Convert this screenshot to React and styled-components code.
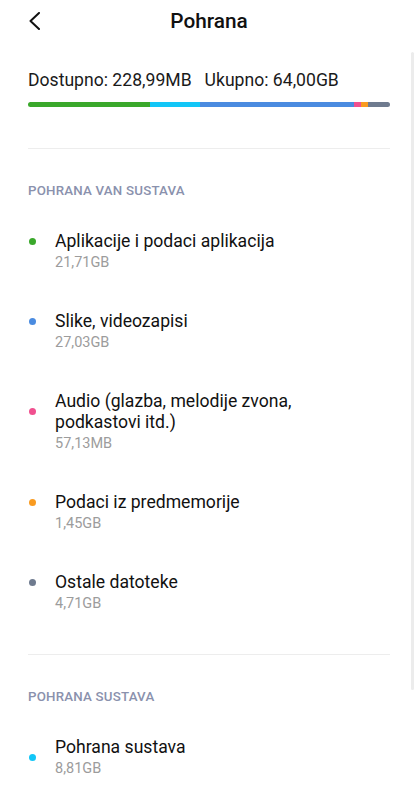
import React from 'react'
import styled, { createGlobalStyle } from 'styled-components';

const GlobalStyle = createGlobalStyle`
    html, body {
        margin: 0;
        padding: 0;
        background: #fff;
    }
    body {
        font-family: Roboto, "Noto Sans", sans-serif;
        color: #111;
    }
`;

const Screen = styled.div`
    position: relative;
    width: 418px;
    height: 800px;
    overflow: hidden;
    background: #fff;
`;

const Content = styled.div`
    padding: 0 28px;
`;

const Header = styled.div`
    position: relative;
    display: flex;
    align-items: center;
    justify-content: center;
    height: 42px;
`;

const BackButton = styled.div`
    position: absolute;
    left: 28px;
    top: 12px;
    width: 14px;
    height: 18px;
`;

const Title = styled.div`
    font-size: 20.8px;
    font-weight: 500;
    color: #111;
`;

const Summary = styled.div`
    display: flex;
    gap: 13px;
    margin-top: 27px;
    font-size: 17.6px;
    line-height: 22px;
    color: #1a1a1a;
`;

const Bar = styled.div`
    display: flex;
    height: 5px;
    margin-top: 11px;
    border-radius: 3px;
    overflow: hidden;
`;

const Segment = styled.div`
    background: ${ p => p.color };
`;

const Divider = styled.div`
    height: 1px;
    background: #ededed;
    margin-top: ${ p => p.top }px;
`;

const SectionTitle = styled.div`
    margin-top: 33px;
    margin-bottom: 11px;
    font-size: 13.3px;
    letter-spacing: 0.2px;
    line-height: 18px;
    font-weight: 500;
    color: #8a91ad;
`;

const Item = styled.div`
    display: flex;
    align-items: ${ p => p.centered ? 'center' : 'flex-start' };
    padding: 19.5px 0;
`;

const DotWrap = styled.div`
    display: flex;
    align-items: center;
    width: 27px;
    height: ${ p => p.h }px;
    flex-shrink: 0;
`;

const Dot = styled.div`
    width: 7px;
    height: 7px;
    margin-left: 1px;
    border-radius: 50%;
    background: ${ p => p.color };
`;

const ItemText = styled.div`
    display: flex;
    flex-direction: column;
`;

const ItemTitle = styled.div`
    font-size: 17.6px;
    line-height: 21px;
    color: #111;
`;

const ItemSize = styled.div`
    margin-top: 2px;
    font-size: 14.5px;
    line-height: 18px;
    color: #9c9c9c;
`;

const Scrollbar = styled.div`
    position: absolute;
    right: 4px;
    top: 52px;
    width: 3px;
    height: 638px;
    background: #ececec;
    border-radius: 2px;
`;

const segments = [
    { color: '#3aa82b', width: 122 },
    { color: '#12c6f7', width: 50 },
    { color: '#4a8be0', width: 154 },
    { color: '#f0508f', width: 7 },
    { color: '#f99b20', width: 7 },
    { color: '#6f7b8f', width: 22 },
];

const external = [
    { color: '#3aa82b', title: 'Aplikacije i podaci aplikacija', size: '21,71GB' },
    { color: '#4a8be0', title: 'Slike, videozapisi', size: '27,03GB' },
    { color: '#f0508f', title: ['Audio (glazba, melodije zvona,', 'podkastovi itd.)'], size: '57,13MB' },
    { color: '#f99b20', title: 'Podaci iz predmemorije', size: '1,45GB' },
    { color: '#6f7b8f', title: 'Ostale datoteke', size: '4,71GB' },
];

const StorageItem = ({ color, title, size, centered }) => {
    const lines = Array.isArray(title) ? title : [title];
    return (
        <Item centered={ centered }>
            <DotWrap h={ centered ? 41 : lines.length * 21 }>
                <Dot color={ color } />
            </DotWrap>
            <ItemText>
                { lines.map(l => <ItemTitle key={ l }>{ l }</ItemTitle>) }
                <ItemSize>{ size }</ItemSize>
            </ItemText>
        </Item>
    );
}

const App = () => {
    return (
        <Screen>
            <GlobalStyle />
            <Header>
                <BackButton>
                    <svg width="14" height="18" viewBox="0 0 14 18">
                        <path d="M11 1 L2.5 9 L11 17" fill="none" stroke="#111" strokeWidth="2" strokeLinecap="round" strokeLinejoin="round" />
                    </svg>
                </BackButton>
                <Title>Pohrana</Title>
            </Header>
            <Content>
                <Summary>
                    <span>Dostupno: 228,99MB</span>
                    <span>Ukupno: 64,00GB</span>
                </Summary>
                <Bar>
                    {
                        segments.map((s, i) => (
                            <Segment key={ i } color={ s.color } style={ { width: s.width } } />
                        ))
                    }
                </Bar>
                <Divider top={ 41 } />
                <SectionTitle>POHRANA VAN SUSTAVA</SectionTitle>
                {
                    external.map(it => <StorageItem key={ it.size } { ...it } />)
                }
                <Divider top={ 22 } />
                <SectionTitle>POHRANA SUSTAVA</SectionTitle>
                <StorageItem color="#12c6f7" title="Pohrana sustava" size="8,81GB" centered />
            </Content>
            <Scrollbar />
        </Screen>
    );
}

export default App;
